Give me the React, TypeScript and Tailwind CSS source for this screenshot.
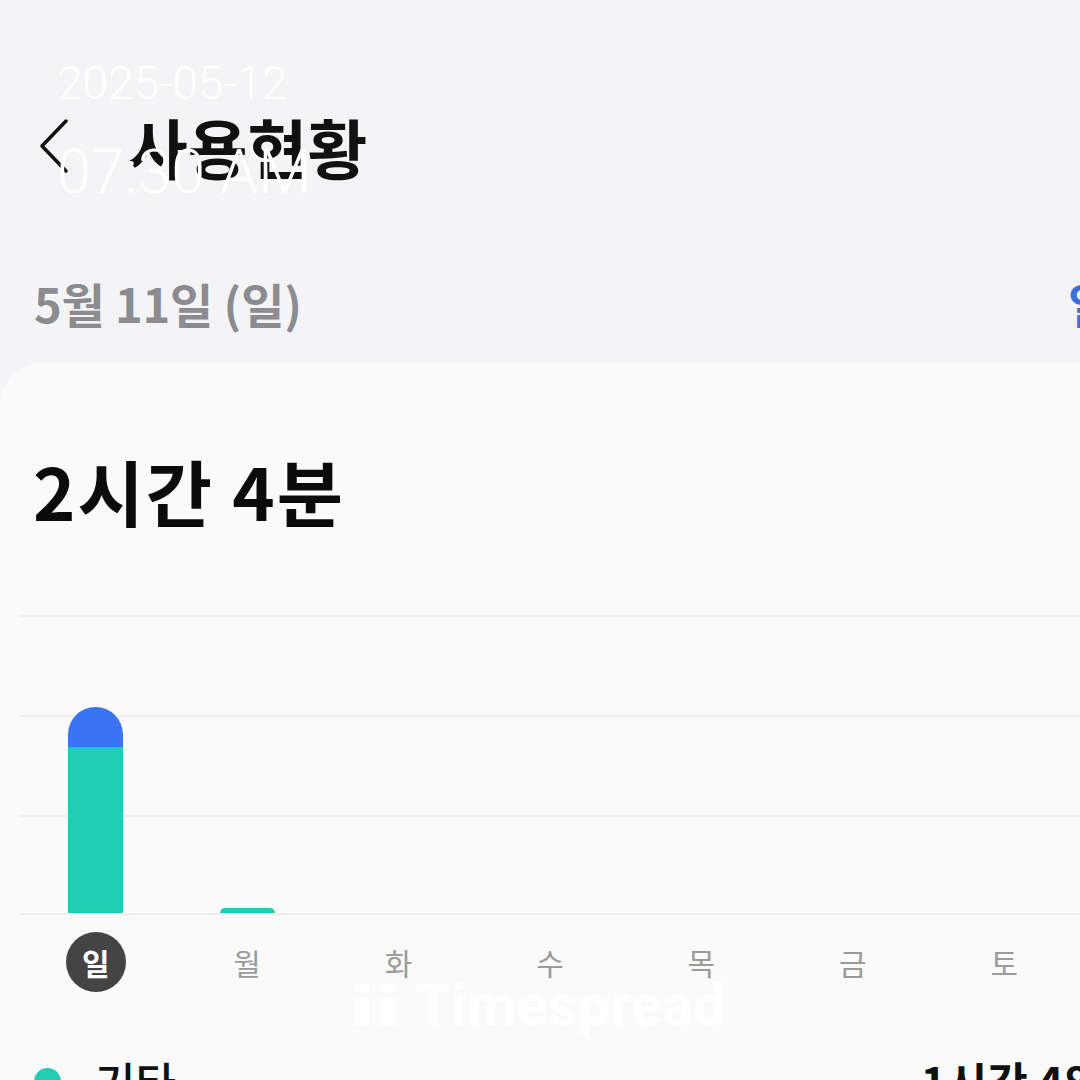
import React from 'react';

const DAYS = ['일', '월', '화', '수', '목', '금', '토'];

// bar segments in px, chart is 300px tall
const BARS: { teal: number; blue: number }[] = [
  { teal: 166, blue: 40 },
  { teal: 5, blue: 0 },
  { teal: 0, blue: 0 },
  { teal: 0, blue: 0 },
  { teal: 0, blue: 0 },
  { teal: 0, blue: 0 },
  { teal: 0, blue: 0 },
];

const kr = "font-['Noto_Sans_CJK_KR',sans-serif]";

const App: React.FC = () => {
  return (
    <div className={`relative w-[1080px] h-[1080px] overflow-hidden bg-[#f4f4f6] ${kr}`}>
      {/* Header */}
      <div className="flex items-center h-[120px] pt-[86px] pl-[34px] box-content">
        <svg width="38" height="58" viewBox="0 0 38 58" className="mr-[56px]">
          <path d="M32 4 L8 29 L32 54" fill="none" stroke="#111" strokeWidth="3.5" strokeLinecap="round" strokeLinejoin="round" />
        </svg>
        <h1 className="text-[65px] font-bold leading-none text-[#111] tracking-[0px]">사용현황</h1>
      </div>

      {/* Date row */}
      <div className="relative flex items-center h-[95px] pl-[34px] mt-[50px]">
        <span className="text-[47px] font-semibold text-[#8b8b90] tracking-[-0.2px]">5월 11일 (일)</span>
        <span className="absolute left-[1068px] text-[47px] font-semibold text-[#3d6fd8] whitespace-nowrap">일별</span>
      </div>

      {/* Card */}
      <div className="mt-[11px] bg-[#fafafa] rounded-tl-[44px] flex flex-col pb-[40px]">
        <div className="pt-[92px] pl-[33px] text-[72px] font-bold leading-none text-[#0b0b0b] tracking-[2px]">
          2시간 4분
        </div>

        {/* Chart */}
        <div className="mt-[89px] ml-[20px] grid">
          <div className="[grid-area:1/1] flex flex-col">
            <div className="h-[100px] border-t-2 border-[#efefef]" />
            <div className="h-[100px] border-t-2 border-[#efefef]" />
            <div className="h-[100px] border-t-2 border-b-2 border-[#efefef]" />
          </div>
          <div className="[grid-area:1/1] grid grid-cols-7 items-end h-[300px] pb-[2px]">
            {BARS.map((b, i) => (
              <div key={i} className="flex justify-center">
                {b.teal + b.blue > 0 && (
                  <div
                    className="w-[55px] rounded-t-full overflow-hidden flex flex-col"
                    style={{ height: b.teal + b.blue }}
                  >
                    <div className="bg-[#3b73f5]" style={{ height: b.blue }} />
                    <div className="bg-[#1fcdb5] flex-1" />
                  </div>
                )}
              </div>
            ))}
          </div>
        </div>

        {/* Day labels */}
        <div className="ml-[20px] grid grid-cols-7 mt-[17px]">
          {DAYS.map((d, i) => (
            <div key={d} className="flex justify-center">
              {i === 0 ? (
                <div className="w-[60px] h-[60px] rounded-full bg-[#444444] flex items-center justify-center text-[30px] font-bold text-white">
                  {d}
                </div>
              ) : (
                <div className="h-[60px] flex items-center text-[30px] text-[#9b9b9b]">{d}</div>
              )}
            </div>
          ))}
        </div>

        {/* Legend row */}
        <div className="mt-[56px] flex items-center justify-between pl-[34px]">
          <div className="flex items-center gap-[34px]">
            <div className="w-[27px] h-[27px] rounded-full bg-[#1fcdb5]" />
            <span className="text-[44px] font-medium text-[#111]">기타</span>
          </div>
          <span className="text-[44px] font-bold text-[#111] whitespace-nowrap mr-[-50px]">1시간 48분</span>
        </div>
      </div>

      {/* Overlay watermarks */}
      <div className="absolute left-[57px] top-[60px] font-['Roboto',sans-serif] font-light text-white leading-none">
        <div className="text-[46px]">2025-05-12</div>
        <div className="text-[61px] mt-[36px]">07:30 AM</div>
      </div>
      <div className="absolute left-[355px] top-[976px] flex items-center gap-[18px] text-white/90 font-['Roboto',sans-serif] font-bold">
        <svg width="42" height="42" viewBox="0 0 42 42">
          <rect x="0" y="0" width="14" height="8" fill="white" />
          <rect x="0" y="13" width="14" height="29" fill="white" />
          <rect x="26" y="0" width="14" height="8" fill="white" />
          <rect x="26" y="13" width="14" height="29" fill="white" />
        </svg>
        <span className="text-[58px] leading-none">Timespread</span>
      </div>
    </div>
  );
};

export default App;
